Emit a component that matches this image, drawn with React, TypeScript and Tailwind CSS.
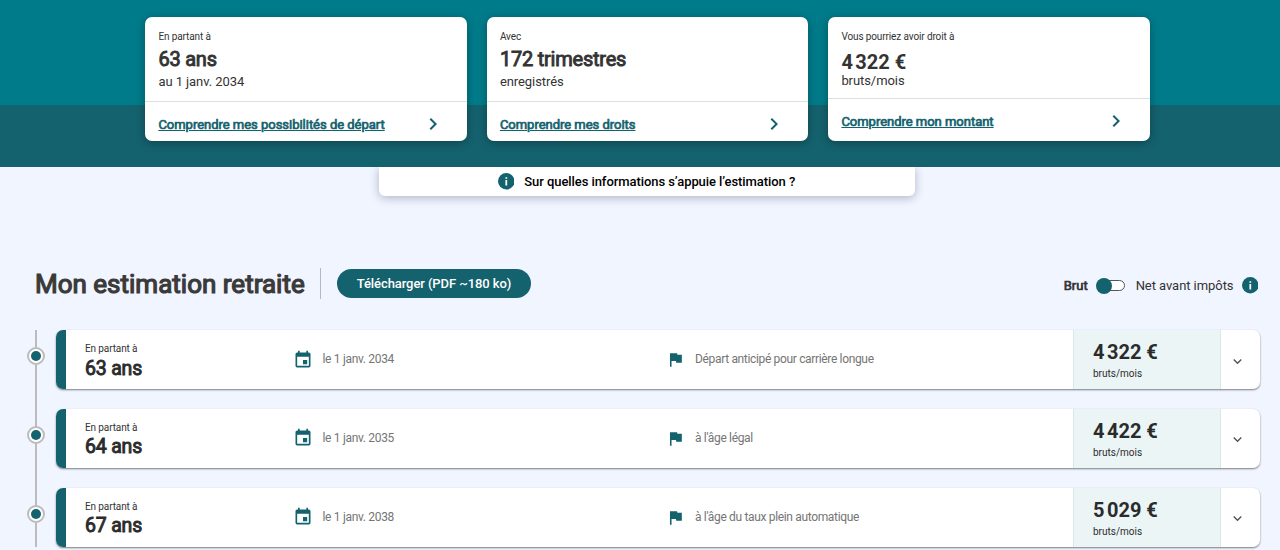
import React from "react";
import clsx from "clsx";
import { MdChevronRight, MdEvent, MdExpandMore, MdFlag } from "react-icons/md";

type Summary = {
  label: string;
  value: string;
  detail: string;
  link: string;
  isAmount?: boolean;
};

type Estimation = {
  age: string;
  date: string;
  reason: string;
  amount: string;
};

const summaries: Summary[] = [
  {
    label: "En partant à",
    value: "63 ans",
    detail: "au 1 janv. 2034",
    link: "Comprendre mes possibilités de départ"
  },
  {
    label: "Avec",
    value: "172 trimestres",
    detail: "enregistrés",
    link: "Comprendre mes droits"
  },
  {
    label: "Vous pourriez avoir droit à",
    value: "4\u202f322 €",
    detail: "bruts/mois",
    link: "Comprendre mon montant",
    isAmount: true
  }
];

const estimations: Estimation[] = [
  {
    age: "63 ans",
    date: "le 1 janv. 2034",
    reason: "Départ anticipé pour carrière longue",
    amount: "4\u202f322 €"
  },
  {
    age: "64 ans",
    date: "le 1 janv. 2035",
    reason: "à l'âge légal",
    amount: "4\u202f422 €"
  },
  {
    age: "67 ans",
    date: "le 1 janv. 2038",
    reason: "à l'âge du taux plein automatique",
    amount: "5\u202f029 €"
  }
];

const InfoIcon: React.FC = () => (
  <svg viewBox="0 0 16 16" className="size-[16.5px] shrink-0">
    <circle cx="8" cy="8" r="8" fill="#14626e" />
    <path d="M7.2 4h1.7v1.6H7.2zM7.2 6.7h1.7V12H7.2z" fill="#fff" />
  </svg>
);

const SummaryCard: React.FC<{ summary: Summary }> = ({ summary }) => (
  <div className="flex h-[124.5px] flex-1 flex-col overflow-hidden rounded-[7px] bg-white text-[#333] shadow-[0_2px_10px_rgba(0,0,0,0.3)]">
    <div
      className={clsx(
        "shrink-0 border-b border-[#dedede] px-[13px] pt-[13px]",
        summary.isAmount ? "h-[82px]" : "h-[85px]"
      )}
    >
      <p className="text-[10px] leading-[14px] tracking-[-0.12px]">
        {summary.label}
      </p>
      <p
        className={clsx(
          "text-[20px] leading-6",
          summary.isAmount
            ? "mt-[6px] font-bold tracking-[-0.8px]"
            : "mt-[3px] tracking-[-0.22px] [-webkit-text-stroke:0.9px_#333]"
        )}
      >
        {summary.value}
      </p>
      <p
        className={clsx(
          "text-[13px] leading-4 tracking-[-0.07px]",
          summary.isAmount ? "-mt-px" : "mt-[3px]"
        )}
      >
        {summary.detail}
      </p>
    </div>
    <div className="flex h-[46px] shrink-0 items-center justify-between pr-[22px] pl-[13px] text-[#14626e]">
      <span className="text-[13px] leading-4 tracking-[-0.02px] underline [-webkit-text-stroke:0.7px_#14626e]">
        {summary.link}
      </span>
      <MdChevronRight size={24} className="mb-px" />
    </div>
  </div>
);

const EstimationRow: React.FC<{ estimation: Estimation }> = ({
  estimation
}) => (
  <div className="flex h-[78.75px] last:h-[59px]">
    <div className="relative w-[28px] shrink-0">
      <div className="mx-auto h-full w-[2px] translate-x-[-6px] bg-[#bcbcbc]" />
      <div className="absolute top-[17px] -left-[1px] flex size-[18px] items-center justify-center rounded-full border-2 border-[#bcbcbc] bg-white">
        <div className="size-[10px] rounded-full bg-[#14626e]" />
      </div>
    </div>
    <div className="flex h-[59px] w-[1204px] overflow-hidden rounded-[7px] bg-white shadow-[0_1px_2px_rgba(0,0,0,0.5)]">
      <div className="w-[10px] bg-[#14626e]" />
      <div className="w-[227px] pt-3 pl-[19px] text-[#333]">
        <p className="text-[10px] leading-[14px] tracking-[-0.12px]">
          En partant à
        </p>
        <p className="mt-[0.7px] text-[19.5px] leading-6 tracking-[-0.2px] text-[#2b2b2b] [-webkit-text-stroke:0.9px_#2b2b2b]">
          {estimation.age}
        </p>
      </div>
      <div className="flex w-[373px] items-center pb-px text-[12px] tracking-[-0.32px] text-[#757575]">
        <MdEvent size={20} color="#14626e" className="mt-px" />
        <span className="ml-[9.5px]">{estimation.date}</span>
      </div>
      <div className="flex flex-1 items-center pb-px text-[12px] tracking-[-0.34px] text-[#757575]">
        <MdFlag size={19} color="#14626e" className="mt-px" />
        <span className="ml-[10px]">{estimation.reason}</span>
      </div>
      <div className="w-[148px] border-x border-[#dce5e7] bg-[#ebf5f6] pt-[10px] pl-[19px] text-[#2b2b2b]">
        <p className="text-[20px] leading-6 font-bold tracking-[-0.8px]">
          {estimation.amount}
        </p>
        <p className="mt-[3px] text-[10px] leading-[14px]">bruts/mois</p>
      </div>
      <div className="flex w-[39px] items-center justify-center pt-[3px] pr-[6px] text-[#555]">
        <MdExpandMore size={17} />
      </div>
    </div>
  </div>
);

const App: React.FC = () => (
  <div className="h-[550px] overflow-hidden bg-[#f1f5ff] font-['Roboto',sans-serif]">
    <header className="relative z-10 h-[167px] bg-linear-to-b from-[#007b8a] from-[105px] to-[#14626e] to-[105px] pt-[16.6px]">
      <div className="ml-[145.4px] flex w-[1004.5px] gap-5">
        {summaries.map(summary => (
          <SummaryCard key={summary.link} summary={summary} />
        ))}
      </div>
    </header>
    <div className="ml-[379px] flex h-[29px] w-[536px] items-center justify-center gap-[10px] rounded-b-[6px] bg-white pr-px text-[13px] font-medium tracking-[-0.07px] text-black shadow-[0_2px_10px_rgba(30,30,60,0.3)]">
      <InfoIcon />
      Sur quelles informations s’appuie l’estimation ?
    </div>
    <main className="pt-[72px]">
      <div className="flex h-[31px] items-center pr-[22px] pl-[35px]">
        <h1 className="w-[269px] text-[26px] leading-8 whitespace-nowrap text-[#3a3a3a] [-webkit-text-stroke:1.2px_#3a3a3a]">
          Mon estimation retraite
        </h1>
        <div className="ml-4 h-[31px] w-px bg-[#b5b8bf]" />
        <button className="ml-4 h-[29px] w-[194px] rounded-full bg-[#14626e] text-[13px] font-medium tracking-[-0.08px] text-white">
          Télécharger (PDF ~180 ko)
        </button>
        <div className="mt-[4px] ml-auto flex items-center text-[13px] text-[#333]">
          <span className="[-webkit-text-stroke:0.7px_#333]">Brut</span>
          <div className="ml-2 flex h-4 w-[29px] items-center">
            <div className="z-10 size-4 rounded-full bg-[#14626e]" />
            <div className="-ml-[8px] h-[11px] w-[21px] rounded-full border border-[#555] bg-white" />
          </div>
          <span className="mr-2 ml-[11px] tracking-[-0.06px]">
            Net avant impôts
          </span>
          <InfoIcon />
        </div>
      </div>
      <div className="mt-[31px] ml-7">
        {estimations.map(estimation => (
          <EstimationRow key={estimation.age} estimation={estimation} />
        ))}
      </div>
    </main>
  </div>
);

export default App;
